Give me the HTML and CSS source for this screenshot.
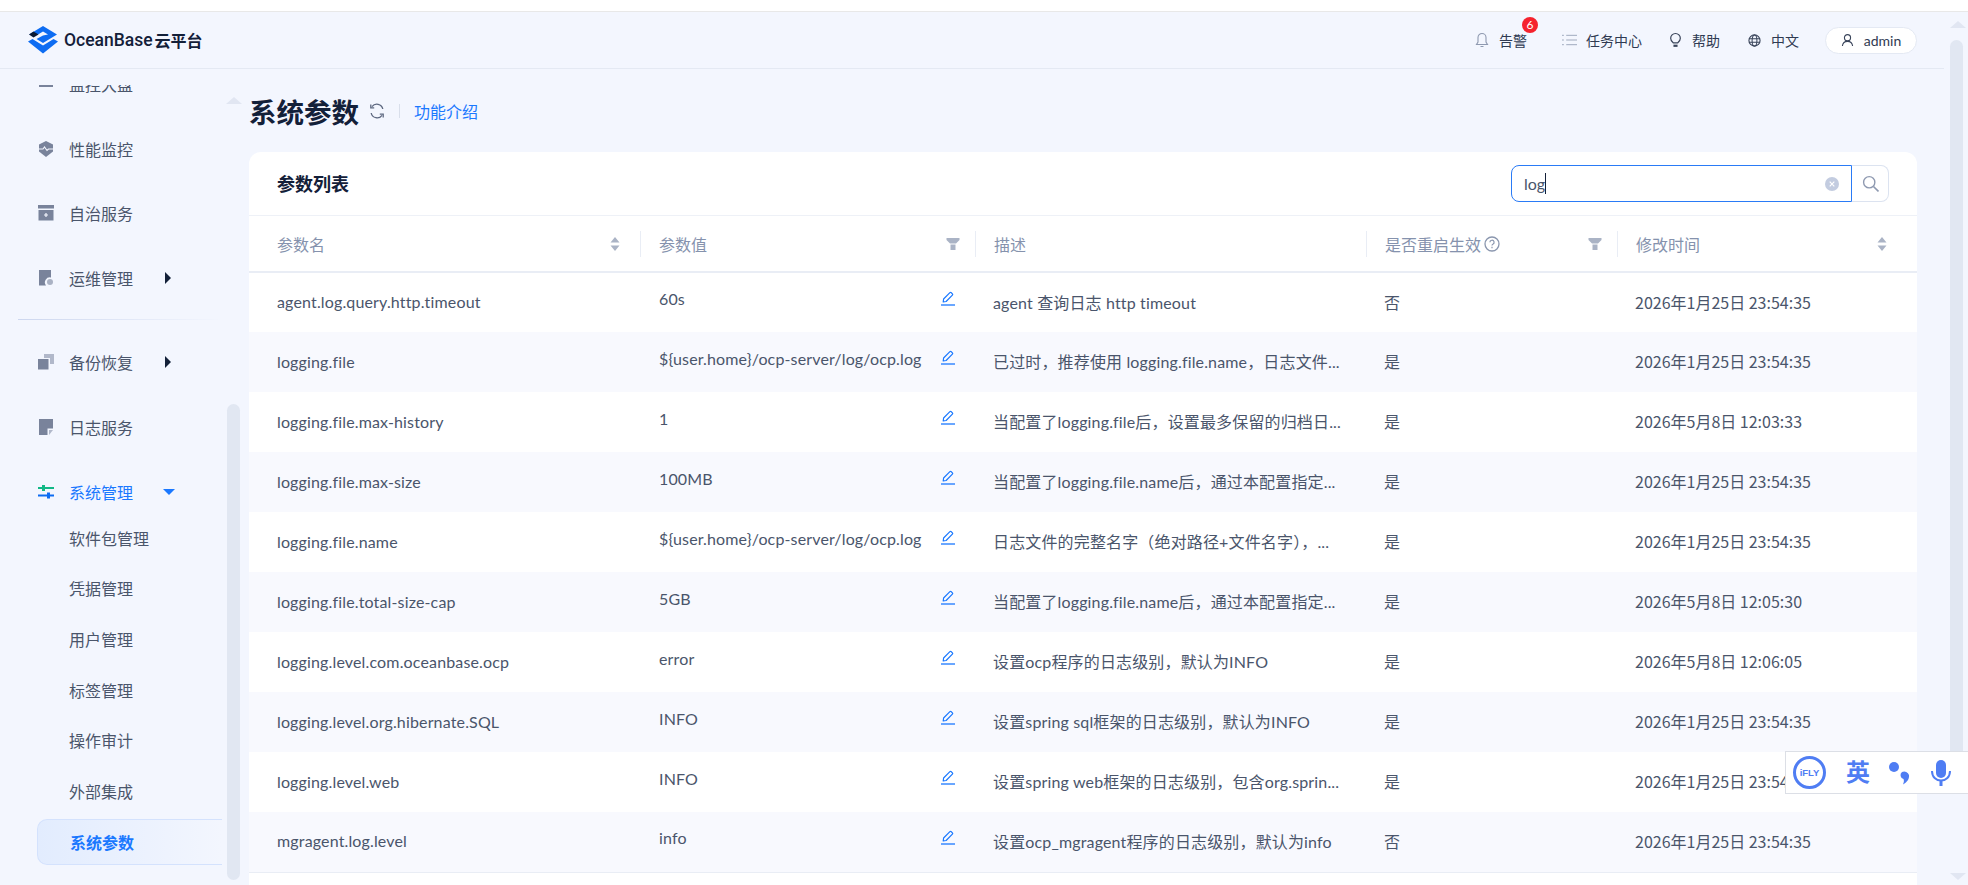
FILE: index.html
```html
<!DOCTYPE html>
<html lang="zh-CN">
<head>
    <meta charset="UTF-8">
    <title>系统参数 - OceanBase 云平台</title>
    <link rel="stylesheet" href="styles.css">
</head>
<body>
    <svg class="sprites" width="0" height="0">
        <symbol id="i-edit" viewBox="0 0 16 16">
            <path d="M3.2 11 3.6 8 9.9 1.7a1 1 0 0 1 1.4 0l1.1 1.1a1 1 0 0 1 0 1.4L6.1 10.500 3.200 11Z" fill="none" stroke="currentColor" stroke-width="1.200" stroke-linejoin="round"/>
            <path d="M1 14h14" stroke="currentColor" stroke-width="1.300"/>
        </symbol>
        <symbol id="i-sort" viewBox="0 0 10 16">
            <path d="M5 1 9.500 6.500H.5ZM5 15 .5 9.500h9Z" fill="currentColor"/>
        </symbol>
        <symbol id="i-filter" viewBox="0 0 14 14">
            <path d="M.5 1h13v2L10 6.500H4L.5 3Z" fill="currentColor"/>
            <path d="M4.500 7.500h5V13h-5Z" fill="currentColor"/>
        </symbol>
    </svg>

    <div class="top-strip"></div>
    <div class="page">
        <div class="app">
            <header class="header">
                <div class="logo">
                    <svg class="logo-mark" viewBox="0 0 30 28" width="30" height="28">
                        <path d="M15 0 29 8.500 15 17 8.500 13 15 9.500 20 8.500 15 5.500 10 8.500 1 8.500Z" fill="#0d6cf2"/>
                        <path d="M1 8.500 5.500 5.500 10.500 8.500 5.500 11.500Z" fill="#0b1a33"/>
                        <path d="M0 15.500 4.500 13 15 19.500 25.500 13 30 15.500 15 27.500Z" fill="#0d6cf2"/>
                    </svg>
                    <span class="logo-name">OceanBase</span>
                    <span class="logo-cn">云平台</span>
                </div>
                <nav class="header-nav">
                    <a class="nav-item nav-alarm">
                        <svg viewBox="0 0 14 16" width="14" height="16"><path d="M7 1.500a4 4 0 0 0-4 4V10l-1.500 2.500h11L11 10V5.500a4 4 0 0 0-4-4ZM5.500 14.500h3" fill="none" stroke="#8e99b0" stroke-width="1.100"/></svg>
                        <span>告警</span>
                        <b class="badge">6</b>
                    </a>
                    <a class="nav-item nav-task">
                        <svg viewBox="0 0 16 14" width="15" height="14"><path d="M4.500 2H16M4.500 7H16M4.500 12H16M0 2h2M0 7h2M0 12h2" stroke="#9aa5ba" stroke-width="1"/></svg>
                        <span>任务中心</span>
                    </a>
                    <a class="nav-item nav-help">
                        <svg viewBox="0 0 14 16" width="13" height="16"><path d="M4.500 11C3 9.800 1.800 8.500 1.800 6.200a5.200 5.200 0 0 1 10.400 0c0 2.300-1.200 3.600-2.700 4.800Z" fill="none" stroke="#39445a" stroke-width="1.300"/><path d="M4.800 13h4.400v2.400H4.800Z" fill="#39445a"/></svg>
                        <span>帮助</span>
                    </a>
                    <a class="nav-item nav-lang">
                        <svg viewBox="0 0 14 14" width="13" height="13"><circle cx="7" cy="7" r="6" fill="none" stroke="#39445a" stroke-width="1.200"/><ellipse cx="7" cy="7" rx="2.600" ry="6" fill="none" stroke="#39445a" stroke-width="1.100"/><path d="M1 5h12M1 9h12" stroke="#39445a" stroke-width="1.100"/></svg>
                        <span>中文</span>
                    </a>
                    <a class="user-pill">
                        <svg viewBox="0 0 14 14" width="13" height="14"><circle cx="7" cy="4.500" r="3.300" fill="none" stroke="#39445a" stroke-width="1.200"/><path d="M1.500 13.500c.4-3.200 2.500-5 5.500-5s5.100 1.800 5.500 5" fill="none" stroke="#39445a" stroke-width="1.200"/></svg>
                        <span>admin</span>
                    </a>
                </nav>
            </header>

            <div class="body-row">
                <aside class="sidebar">
                    <div class="scroll-up"></div>
                    <div class="scroll-thumb"></div>
                    <ul class="menu">
                        <li class="menu-item">
                            <svg class="menu-icon" viewBox="0 0 16 16"><path d="M1 9h14v2H1Z" fill="#79839b"/></svg>
                            <span>监控大盘</span>
                        </li>
                        <li class="menu-item">
                            <svg class="menu-icon" viewBox="0 0 16 16"><path d="M8 0 15 3.500v7L8 16 1 10.500v-7Z" fill="#79839b"/><path d="M1 8h4l1.500-2 2.500 3.500L10.500 8H15" fill="none" stroke="#f3f6fe" stroke-width="1.100"/></svg>
                            <span>性能监控</span>
                        </li>
                        <li class="menu-item">
                            <svg class="menu-icon" viewBox="0 0 16 16"><path d="M0 0h16v3.500H0ZM.5 5h15v10.500H.5Z" fill="#79839b"/><path d="M6 10h4M8 8v4" stroke="#f3f6fe" stroke-width="1.200"/></svg>
                            <span>自治服务</span>
                        </li>
                        <li class="menu-item">
                            <svg class="menu-icon" viewBox="0 0 16 16"><path d="M1 0h12v7.500a5 5 0 0 0-5 8H1Z" fill="#79839b"/><circle cx="12" cy="12" r="3" fill="#aab2c4"/></svg>
                            <span>运维管理</span>
                            <i class="caret-right"></i>
                        </li>
                        <li class="menu-divider"></li>
                        <li class="menu-item">
                            <svg class="menu-icon" viewBox="0 0 16 16"><path d="M6 0h10v10h-4V4H6Z" fill="#b1b8ca"/><path d="M0 5h10.500v10.500H0Z" fill="#79839b"/></svg>
                            <span>备份恢复</span>
                            <i class="caret-right"></i>
                        </li>
                        <li class="menu-item">
                            <svg class="menu-icon" viewBox="0 0 16 16"><path d="M1 0h14v9.500H9.500V16H1Z" fill="#79839b"/><path d="M11 11h4l-4 5Z" fill="#b1b8ca"/></svg>
                            <span>日志服务</span>
                        </li>
                        <li class="menu-item is-open">
                            <svg class="menu-icon" viewBox="0 0 16 16"><path d="M0 3h16v2H0Z" fill="#12b886"/><path d="M4 1h3v6H4Z" fill="#12b886"/><path d="M0 10.500h16v2H0Z" fill="#0d6cf2"/><path d="M9 8.500h3v6H9Z" fill="#0d6cf2"/></svg>
                            <span>系统管理</span>
                            <i class="caret-down"></i>
                        </li>
                        <li class="sub-item">软件包管理</li>
                        <li class="sub-item">凭据管理</li>
                        <li class="sub-item">用户管理</li>
                        <li class="sub-item">标签管理</li>
                        <li class="sub-item">操作审计</li>
                        <li class="sub-item">外部集成</li>
                        <li class="sub-item is-active">系统参数</li>
                    </ul>
                </aside>

                <main class="content">
                    <div class="title-row">
                        <h1>系统参数</h1>
                        <svg class="refresh" viewBox="0 0 16 16" width="16" height="16"><path d="M13.800 6A6 6 0 0 0 3 3.700M2.200 10A6 6 0 0 0 13 12.300" fill="none" stroke="#5d6880" stroke-width="1.300"/><path d="M1.800 1.500v3.400h3.400M14.200 14.500v-3.400h-3.400" fill="none" stroke="#5d6880" stroke-width="1.300"/></svg>
                        <span class="title-sep"></span>
                        <a class="intro-link">功能介绍</a>
                    </div>

                    <section class="card">
                        <div class="card-head">
                            <h2>参数列表</h2>
                            <div class="search">
                                <div class="search-input">
                                    <span class="search-text">log</span><i class="text-caret"></i>
                                    <svg class="search-clear" viewBox="0 0 14 14" width="14" height="14"><circle cx="7" cy="7" r="7" fill="#c3cce0"/><path d="M4.700 4.700l4.600 4.600M9.300 4.700 4.700 9.300" stroke="#fff" stroke-width="1.200"/></svg>
                                </div>
                                <div class="search-btn">
                                    <svg viewBox="0 0 16 16" width="17" height="17"><circle cx="6.800" cy="6.800" r="5.300" fill="none" stroke="#8e99b0" stroke-width="1.300"/><path d="M10.800 10.800 15.500 15.500" stroke="#8e99b0" stroke-width="1.500"/></svg>
                                </div>
                            </div>
                        </div>

                        <table class="params">
                            <colgroup>
                                <col class="col-name"><col class="col-value"><col class="col-desc"><col class="col-restart"><col class="col-time">
                            </colgroup>
                            <thead>
                                <tr>
                                    <th class="th-first"><div class="th-in">参数名<svg class="th-icon sort"><use href="#i-sort"/></svg></div></th>
                                    <th><div class="th-in th-filter">参数值<svg class="th-icon filter"><use href="#i-filter"/></svg></div></th>
                                    <th><div class="th-in">描述</div></th>
                                    <th><div class="th-in th-filter">是否重启生效
                                        <svg class="help" viewBox="0 0 16 16" width="16" height="16"><circle cx="8" cy="8" r="7" fill="none" stroke="#8a96ae" stroke-width="1.300"/><path d="M5.900 6.300a2.100 2.100 0 1 1 3 1.900c-.6.300-.9.700-.9 1.400M8 10.800v1.400" fill="none" stroke="#8a96ae" stroke-width="1.200"/></svg>
                                        <svg class="th-icon filter"><use href="#i-filter"/></svg></div></th>
                                    <th><div class="th-in th-last">修改时间<svg class="th-icon sort"><use href="#i-sort"/></svg></div></th>
                                </tr>
                            </thead>
                            <tbody>
                                <tr>
                                    <td class="td-first">agent.log.query.http.timeout</td>
                                    <td class="td-value"><div class="value-in"><span>60s</span><svg class="edit"><use href="#i-edit"/></svg></div></td>
                                    <td>agent 查询日志 http timeout</td>
                                    <td>否</td>
                                    <td class="td-time">2026年1月25日 23:54:35</td>
                                </tr>
                                <tr>
                                    <td class="td-first">logging.file</td>
                                    <td class="td-value"><div class="value-in"><span>${user.home}/ocp-server/log/ocp.log</span><svg class="edit"><use href="#i-edit"/></svg></div></td>
                                    <td>已过时，推荐使用 logging.file.name，日志文件...</td>
                                    <td>是</td>
                                    <td class="td-time">2026年1月25日 23:54:35</td>
                                </tr>
                                <tr>
                                    <td class="td-first">logging.file.max-history</td>
                                    <td class="td-value"><div class="value-in"><span>1</span><svg class="edit"><use href="#i-edit"/></svg></div></td>
                                    <td>当配置了logging.file后，设置最多保留的归档日...</td>
                                    <td>是</td>
                                    <td class="td-time">2026年5月8日 12:03:33</td>
                                </tr>
                                <tr>
                                    <td class="td-first">logging.file.max-size</td>
                                    <td class="td-value"><div class="value-in"><span>100MB</span><svg class="edit"><use href="#i-edit"/></svg></div></td>
                                    <td>当配置了logging.file.name后，通过本配置指定...</td>
                                    <td>是</td>
                                    <td class="td-time">2026年1月25日 23:54:35</td>
                                </tr>
                                <tr>
                                    <td class="td-first">logging.file.name</td>
                                    <td class="td-value"><div class="value-in"><span>${user.home}/ocp-server/log/ocp.log</span><svg class="edit"><use href="#i-edit"/></svg></div></td>
                                    <td>日志文件的完整名字（绝对路径+文件名字），...</td>
                                    <td>是</td>
                                    <td class="td-time">2026年1月25日 23:54:35</td>
                                </tr>
                                <tr>
                                    <td class="td-first">logging.file.total-size-cap</td>
                                    <td class="td-value"><div class="value-in"><span>5GB</span><svg class="edit"><use href="#i-edit"/></svg></div></td>
                                    <td>当配置了logging.file.name后，通过本配置指定...</td>
                                    <td>是</td>
                                    <td class="td-time">2026年5月8日 12:05:30</td>
                                </tr>
                                <tr>
                                    <td class="td-first">logging.level.com.oceanbase.ocp</td>
                                    <td class="td-value"><div class="value-in"><span>error</span><svg class="edit"><use href="#i-edit"/></svg></div></td>
                                    <td>设置ocp程序的日志级别，默认为INFO</td>
                                    <td>是</td>
                                    <td class="td-time">2026年5月8日 12:06:05</td>
                                </tr>
                                <tr>
                                    <td class="td-first">logging.level.org.hibernate.SQL</td>
                                    <td class="td-value"><div class="value-in"><span>INFO</span><svg class="edit"><use href="#i-edit"/></svg></div></td>
                                    <td>设置spring sql框架的日志级别，默认为INFO</td>
                                    <td>是</td>
                                    <td class="td-time">2026年1月25日 23:54:35</td>
                                </tr>
                                <tr>
                                    <td class="td-first">logging.level.web</td>
                                    <td class="td-value"><div class="value-in"><span>INFO</span><svg class="edit"><use href="#i-edit"/></svg></div></td>
                                    <td>设置spring web框架的日志级别，包含org.sprin...</td>
                                    <td>是</td>
                                    <td class="td-time">2026年1月25日 23:54:35</td>
                                </tr>
                                <tr>
                                    <td class="td-first">mgragent.log.level</td>
                                    <td class="td-value"><div class="value-in"><span>info</span><svg class="edit"><use href="#i-edit"/></svg></div></td>
                                    <td>设置ocp_mgragent程序的日志级别，默认为info</td>
                                    <td>否</td>
                                    <td class="td-time">2026年1月25日 23:54:35</td>
                                </tr>
                            </tbody>
                        </table>
                    </section>
                </main>
            </div>
        </div>

        <div class="page-scroll">
            <div class="page-up"></div>
            <div class="page-thumb"></div>
            <div class="page-down"></div>
        </div>
    </div>

    <!-- 输入法悬浮条 -->
    <div class="ime-bar">
        <div class="ime-logo"><span>iFLY</span></div>
        <span class="ime-lang">英</span>
        <svg class="ime-punct" viewBox="0 0 24 24" width="24" height="24"><circle cx="7" cy="6" r="5" fill="#4f7df3"/><path d="M15 11a5 5 0 0 1 7 3c.5 3.500-1.500 7-6 9.500 1-2.500 1.200-4 .5-5.500a4 4 0 0 1-1.500-7Z" fill="#4f7df3"/></svg>
        <svg class="ime-mic" viewBox="0 0 20 26" width="20" height="26"><rect x="5" y="0" width="10" height="18" rx="5" fill="#4f7df3"/><path d="M1 11c0 6 4 9.500 9 9.500s9-3.500 9-9.500" fill="none" stroke="#4f7df3" stroke-width="2"/><path d="M8.500 20h3v6h-3Z" fill="#4f7df3"/></svg>
    </div>
</body>
</html>
```

FILE: styles.css
```css
* {
    box-sizing: border-box;
}
html, body {
    height: 100%;
}
body {
    margin: 0;
    overflow: hidden;
    display: flex;
    flex-direction: column;
    background: #f3f6fe;
    color: #4a556b;
    font-family: Lato, "Noto Sans CJK SC", sans-serif;
    font-size: 16px;
}
ul {
    list-style: none;
    margin: 0;
    padding: 0;
}
.sprites {
    position: absolute;
}
.top-strip {
    height: 12px;
    flex-shrink: 0;
    background: #fff;
    border-bottom: 1px solid #e8e8e8;
}
.page {
    flex-grow: 1;
    display: flex;
    min-height: 0;
}
.app {
    flex-grow: 1;
    min-width: 0;
    display: flex;
    flex-direction: column;
}

/* 顶部 */
.header {
    height: 57px;
    flex-shrink: 0;
    display: flex;
    align-items: center;
    justify-content: space-between;
    padding: 0 27px 0 28px;
    border-bottom: 1px solid #e4e9f3;
}
.logo {
    display: flex;
    align-items: center;
}
.logo-mark {
    margin-right: 6px;
}
.logo-name {
    font-family: Roboto, sans-serif;
    font-weight: 500;
    font-size: 17.500px;
    color: #132039;
    margin-right: 2px;
}
.logo-cn {
    font-weight: 700;
    font-size: 16px;
    color: #132039;
}
.header-nav {
    display: flex;
    align-items: center;
}
.nav-item {
    position: relative;
    display: flex;
    align-items: center;
    font-size: 14px;
    color: #2f3a52;
}
.nav-alarm svg {
    margin-right: 10px;
}
.nav-task {
    margin-left: 35px;
}
.nav-task svg {
    margin-right: 9px;
}
.nav-help {
    margin-left: 27px;
}
.nav-help svg {
    margin-right: 10px;
}
.nav-lang {
    margin-left: 28px;
}
.nav-lang svg {
    margin-right: 10px;
}
.badge {
    position: absolute;
    right: -11px;
    top: -13px;
    width: 16px;
    height: 16px;
    border-radius: 50%;
    background: #f5222d;
    color: #fff;
    font-size: 12px;
    font-weight: 400;
    line-height: 16px;
    text-align: center;
}
.user-pill {
    margin-left: 26px;
    width: 92px;
    height: 27px;
    display: flex;
    align-items: center;
    justify-content: center;
    gap: 10px;
    background: #fff;
    border: 1px solid #e4e9f3;
    border-radius: 14px;
    font-size: 14px;
    color: #2f3a52;
}
.body-row {
    flex-grow: 1;
    min-height: 0;
    display: flex;
}

/* 侧边栏 */
.sidebar {
    position: relative;
    width: 249px;
    flex-shrink: 0;
    padding-top: 16px;
}
.scroll-up {
    position: absolute;
    left: 226px;
    top: 28px;
    border-left: 8px solid transparent;
    border-right: 8px solid transparent;
    border-bottom: 7px solid #e1e6f2;
}
.scroll-thumb {
    position: absolute;
    left: 227px;
    top: 335px;
    width: 13px;
    height: 476px;
    border-radius: 7px;
    background: #e1e7f2;
}
.menu {
    height: 100%;
    overflow: hidden;
}
.menu-item {
    display: flex;
    align-items: center;
    height: 44.6px;
    margin-top: 20px;
    padding-left: 38px;
    color: #4a556b;
}
.menu-item:first-child {
    margin-top: -23.3px;
}
.menu-icon {
    width: 16px;
    height: 16px;
    margin-right: 15px;
    flex-shrink: 0;
}
.caret-right {
    margin-left: 32px;
    border-top: 6px solid transparent;
    border-bottom: 6px solid transparent;
    border-left: 6px solid #132039;
}
.caret-down {
    margin-left: 30px;
    border-left: 6px solid transparent;
    border-right: 6px solid transparent;
    border-top: 6px solid #1a78ff;
}
.menu-item.is-open {
    color: #1a78ff;
}
.menu-divider {
    width: 204px;
    height: 1px;
    margin: 19px 0 0 18px;
    background: linear-gradient(90deg, #cdd7ef, #f3f6fe);
}
.sub-item {
    display: flex;
    align-items: center;
    width: 185px;
    height: 46px;
    margin-top: 4.7px;
    margin-left: 37px;
    padding-left: 32px;
    color: #4a556b;
}
.menu-item + .sub-item {
    margin-top: .7px;
}
.sub-item.is-active {
    color: #1a78ff;
    font-weight: 700;
    background: linear-gradient(90deg, #e2ecfe, #f3f6fe);
    border: 1px solid #d4e2fd;
    border-right: 0;
    border-radius: 10px 0 0 10px;
}

/* 内容区 */
.content {
    flex-grow: 1;
    min-width: 0;
    padding-right: 27px;
    display: flex;
    flex-direction: column;
}
.title-row {
    height: 83px;
    flex-shrink: 0;
    display: flex;
    align-items: center;
}
.title-row h1 {
    margin: 0 10px 0 0;
    font-size: 27.500px;
    font-weight: 700;
    color: #132039;
}
.title-sep {
    width: 1px;
    height: 14px;
    margin: 0 14px;
    background: #d9dfeb;
}
.intro-link {
    color: #1a78ff;
}
.card {
    flex-grow: 1;
    background: #fff;
    border-radius: 12px 12px 0 0;
}
.card-head {
    height: 64px;
    display: flex;
    align-items: center;
    justify-content: space-between;
    padding: 0 28px 0 28px;
    border-bottom: 1px solid #eef1f7;
}
.card-head h2 {
    margin: 0 0 2px;
    font-size: 18px;
    font-weight: 700;
    color: #132039;
}
.search {
    display: flex;
    height: 37px;
}
.search-input {
    width: 341px;
    display: flex;
    align-items: center;
    padding: 0 12px;
    border: 1px solid #2a7bf6;
    border-radius: 8px 0 0 8px;
}
.search-text {
    color: #4a556b;
}
.text-caret {
    width: 1px;
    height: 21px;
    background: #132039;
}
.search-clear {
    margin-left: auto;
}
.search-btn {
    width: 37px;
    display: flex;
    align-items: center;
    justify-content: center;
    border: 1px solid #dce3f0;
    border-left: 0;
    border-radius: 0 8px 8px 0;
}

/* 表格 */
.params {
    width: 100%;
    table-layout: fixed;
    border-collapse: collapse;
}
.col-name {
    width: 391px;
}
.col-value {
    width: 335px;
}
.col-desc {
    width: 391px;
}
.col-restart {
    width: 251px;
}
.params th {
    height: 56px;
    padding: 0;
    font-weight: 400;
    text-align: left;
    color: #8592ad;
    border-bottom: 2px solid #e9edf5;
}
.th-in {
    height: 26px;
    display: flex;
    align-items: center;
    padding: 0 20px 0 18px;
    border-left: 1px solid #e9edf5;
}
.th-first .th-in {
    padding-left: 28px;
    border-left: 0;
}
.th-in.th-filter {
    padding-right: 15px;
}
.th-in.th-last {
    padding-right: 30px;
}
.th-icon {
    margin-left: auto;
}
.sort {
    width: 10px;
    height: 16px;
    color: #aab3c5;
}
.filter {
    width: 14px;
    height: 14px;
    color: #aab3c5;
}
.help {
    margin-left: 3px;
}
.params td {
    height: 60px;
    padding: 0 0 2px 18px;
    white-space: nowrap;
    letter-spacing: .15px;
}
.params tbody tr:nth-child(even) {
    background: #f8f9fe;
}
.params tbody tr:last-child {
    border-bottom: 1px solid #e9edf5;
}
.params .td-first {
    padding-left: 28px;
}
.params .td-value {
    padding: 0 19px 8px 19px;
}
.params .td-time {
    font-family: "Noto Sans CJK SC", sans-serif;
    letter-spacing: 0;
}
.value-in {
    display: flex;
    align-items: center;
    justify-content: space-between;
}
.edit {
    width: 16px;
    height: 16px;
    color: #1a78ff;
}

/* 页面滚动条 */
.page-scroll {
    position: relative;
    width: 24px;
    flex-shrink: 0;
}
.page-up {
    position: absolute;
    left: 6px;
    top: 9px;
    border-left: 8px solid transparent;
    border-right: 8px solid transparent;
    border-bottom: 7px solid #e1e6f2;
}
.page-thumb {
    position: absolute;
    left: 6px;
    top: 28px;
    width: 13px;
    height: 740px;
    border-radius: 7px;
    background: #e1e7f2;
}
.page-down {
    position: absolute;
    left: 6px;
    bottom: 5px;
    border-left: 8px solid transparent;
    border-right: 8px solid transparent;
    border-top: 7px solid #e1e6f2;
}

/* 输入法悬浮条 */
.ime-bar {
    position: fixed;
    left: 1785px;
    top: 751px;
    width: 183px;
    height: 43px;
    display: flex;
    align-items: center;
    padding-left: 7px;
    background: #fff;
    border: 1px solid #dcdfe6;
    border-right: 0;
}
.ime-logo {
    width: 33px;
    height: 33px;
    display: flex;
    align-items: center;
    justify-content: center;
    border: 3px solid #4f7df3;
    border-radius: 50%;
}
.ime-logo span {
    font-family: "Liberation Sans", sans-serif;
    font-size: 9.500px;
    font-weight: 700;
    color: #4f7df3;
}
.ime-lang {
    margin: 0 0 3px 20px;
    font-family: "Noto Sans CJK SC", sans-serif;
    font-size: 24px;
    font-weight: 700;
    line-height: 1;
    color: #4f7df3;
}
.ime-punct {
    margin-left: 17px;
}
.ime-mic {
    margin-left: 20px;
}
```
